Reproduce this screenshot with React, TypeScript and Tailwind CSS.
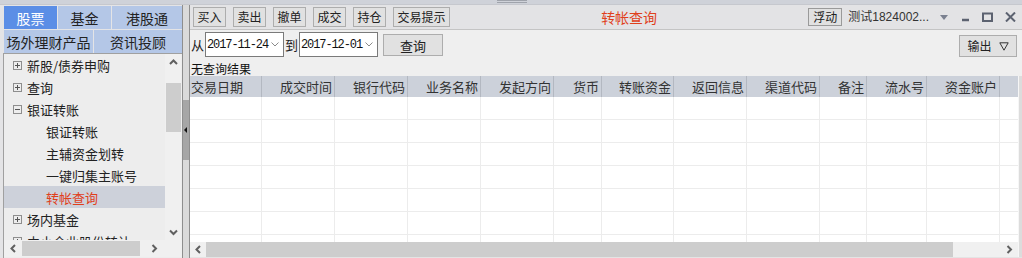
import React from "react";

type TreeRow = { label: string; box?: "plus" | "minus"; sub?: boolean; active?: boolean };

const tree: TreeRow[] = [
  { label: "新股/债券申购", box: "plus" },
  { label: "查询", box: "plus" },
  { label: "银证转账", box: "minus" },
  { label: "银证转账", sub: true },
  { label: "主辅资金划转", sub: true },
  { label: "一键归集主账号", sub: true },
  { label: "转帐查询", sub: true, active: true },
  { label: "场内基金", box: "plus" },
  { label: "中小企业股份转让", box: "plus" },
];

const columns = [
  { label: "交易日期", w: "w-[72px]", left: true },
  { label: "成交时间", w: "w-[73px]" },
  { label: "银行代码", w: "w-[73px]" },
  { label: "业务名称", w: "w-[73px]" },
  { label: "发起方向", w: "w-[73px]" },
  { label: "货币", w: "w-[48px]" },
  { label: "转账资金", w: "w-[72px]" },
  { label: "返回信息", w: "w-[73px]" },
  { label: "渠道代码", w: "w-[73px]" },
  { label: "备注", w: "w-[47px]" },
  { label: "流水号", w: "w-[60px]" },
  { label: "资金账户", w: "w-[73px]" },
];

const Box = ({ open }: { open?: boolean }) => (
  <svg width="9" height="9" viewBox="0 0 9 9" className="shrink-0">
    <rect x="0.5" y="0.5" width="8" height="8" fill="none" stroke="#8e8e8e" />
    <path d="M2 4.5h5" stroke="#555" />
    {!open && <path d="M4.5 2v5" stroke="#555" />}
  </svg>
);

const Chevron = ({ dir }: { dir: "up" | "down" | "left" | "right" }) => {
  const d = {
    up: "M1 5l3.5-3.5L8 5",
    down: "M1 1.5L4.5 5 8 1.5",
    left: "M5 1L1.5 4.5 5 8",
    right: "M1.5 1L5 4.5 1.5 8",
  }[dir];
  const vertical = dir === "up" || dir === "down";
  return (
    <svg width={vertical ? 9 : 7} height={vertical ? 7 : 9} viewBox={vertical ? "0 0 9 7" : "0 0 7 9"}>
      <path d={d} fill="none" stroke="#606060" strokeWidth="2" />
    </svg>
  );
};

const ToolButton = ({ label, w }: { label: string; w: string }) => (
  <button className={`flex h-[20px] ${w} items-center justify-center border border-[#adadad] bg-[#e1e1e1] text-[12px] leading-none text-[#222]`}>
    {label}
  </button>
);

const DateBox = ({ value }: { value: string }) => (
  <div className="flex h-[25px] w-[79px] items-center border border-[#7a7a7a] bg-white pl-[1px] pr-[4px]">
    <span className="font-['Liberation_Mono',monospace] text-[12px] tracking-[-1.1px] text-[#111]">{value}</span>
    <span className="ml-auto">
      <svg width="8" height="5" viewBox="0 0 8 5">
        <path d="M0.5 0.5L4 4 7.5 0.5" fill="none" stroke="#8a8a8a" />
      </svg>
    </span>
  </div>
);

function Sidebar() {
  return (
    <div className="flex w-[182px] shrink-0 flex-col bg-[#e4e4e6] pl-[3px] pt-[1px]">
      <div className="ml-[1px] flex h-[23px] gap-px text-[14px] leading-none">
        <div className="flex w-[53px] items-center justify-center bg-[#5b8ee6] text-white">股票</div>
        <div className="flex w-[53px] items-center justify-center bg-[#b4c7e7]">基金</div>
        <div className="flex flex-1 items-center justify-center bg-[#b4c7e7]">港股通</div>
      </div>
      <div className="ml-[1px] mt-px flex h-[23px] gap-px text-[14px] leading-none">
        <div className="flex w-[89px] items-center justify-center bg-[#b4c7e7]">场外理财产品</div>
        <div className="flex flex-1 items-center justify-center bg-[#b4c7e7]">资讯投顾</div>
      </div>
      <div className="flex flex-1 flex-col border-l border-t border-[#a0a0a0] bg-[#ededed]">
        <div className="flex h-[186px]">
          <div className="w-[161px] overflow-hidden">
            {tree.map((r, i) => (
              <div
                key={i}
                className={`flex h-[22px] items-center text-[13px] leading-none ${r.sub ? "pl-[42px]" : "pl-[9px]"} ${r.active ? "bg-[#cdd1da] text-[#e0401c]" : "text-[#222]"}`}
              >
                {r.box && <Box open={r.box === "minus"} />}
                <span className={r.box ? "ml-[5px]" : ""}>{r.label}</span>
              </div>
            ))}
          </div>
          <div className="flex w-[16px] flex-col items-center bg-[#f0f0f0]">
            <div className="flex h-[14px] items-center pt-[2px]">
              <Chevron dir="up" />
            </div>
            <div className="mt-[15px] h-[49px] w-[15px] bg-[#cdcdcd]" />
            <div className="mt-auto flex h-[16px] items-center">
              <Chevron dir="down" />
            </div>
          </div>
        </div>
        <div className="flex h-[17px] items-center bg-[#f0f0f0]">
          <div className="flex w-[18px] justify-center">
            <Chevron dir="left" />
          </div>
          <div className="h-[15px] w-[118px] bg-[#cdcdcd]" />
          <div className="flex flex-1 justify-center pr-[14px]">
            <Chevron dir="right" />
          </div>
        </div>
      </div>
    </div>
  );
}

function Splitter() {
  return (
    <div className="flex w-[8px] shrink-0 flex-col border-x border-[#8e8e8e] bg-[#dadada]">
      <div className="mt-[95px] flex h-[60px] items-center bg-[#a6a6a6] pl-[1px]">
        <svg width="4" height="6" viewBox="0 0 4 6">
          <path d="M3 0L0 3l3 3z" fill="#111" />
        </svg>
      </div>
    </div>
  );
}

function Main() {
  return (
    <div className="flex min-w-0 flex-1 flex-col">
      <div className="flex h-[25px] shrink-0 items-center border-b border-[#c4c4c4] bg-[#e3e3e5] pl-[3px]">
        <div className="flex gap-[7px]">
          <ToolButton label="买入" w="w-[33px]" />
          <ToolButton label="卖出" w="w-[33px]" />
          <ToolButton label="撤单" w="w-[33px]" />
          <ToolButton label="成交" w="w-[33px]" />
          <ToolButton label="持仓" w="w-[33px]" />
          <ToolButton label="交易提示" w="w-[57px]" />
        </div>
        <div className="flex flex-1 justify-center text-[14px] leading-none text-[#e0401c]">转帐查询</div>
        <div className="flex items-center pr-[6px]">
          <button className="flex h-[18px] w-[34px] items-center justify-center border border-[#9a9a9a] bg-[#e1e1e1] text-[12px] leading-none">
            浮动
          </button>
          <span className="ml-[6px] font-['Liberation_Sans','Noto_Sans_CJK_SC',sans-serif] text-[12px] leading-none text-[#333]">
            测试1824002...
          </span>
          <svg width="8" height="5" viewBox="0 0 8 5" className="ml-[11px]">
            <path d="M0 0h8L4 5z" fill="#7b8190" />
          </svg>
          <svg width="10" height="10" viewBox="0 0 10 10" className="ml-[13px]">
            <path d="M1 8h7" stroke="#5c6270" strokeWidth="2.5" />
          </svg>
          <svg width="11" height="10" viewBox="0 0 11 10" className="ml-[11px]">
            <rect x="1" y="1.5" width="9" height="7.5" fill="none" stroke="#5c6270" strokeWidth="2" />
          </svg>
          <svg width="11" height="10" viewBox="0 0 11 10" className="ml-[12px]">
            <path d="M1 0.5l9 9M10 0.5l-9 9" stroke="#5c6270" strokeWidth="2" />
          </svg>
        </div>
      </div>

      <div className="flex h-[31px] shrink-0 items-start pl-[1px] pt-[2px] text-[13px] leading-none">
        <span className="mt-[6px] w-[14px]">从</span>
        <DateBox value="2017-11-24" />
        <span className="ml-[1px] mt-[6px] w-[14px]">到</span>
        <DateBox value="2017-12-01" />
        <button className="ml-[5px] mt-[2px] flex h-[22px] w-[60px] items-center justify-center border border-[#adadad] bg-[#e1e1e1] text-[13px] leading-none">
          查询
        </button>
        <button className="ml-auto mr-[5px] mt-[3px] flex h-[22px] w-[58px] items-center justify-center gap-[7px] border border-[#adadad] bg-[#e1e1e1] text-[12px] leading-none">
          输出
          <svg width="10" height="9" viewBox="0 0 10 9">
            <path d="M0.8 0.8h8.4L5 8.2z" fill="none" stroke="#333" />
          </svg>
        </button>
      </div>

      <div className="h-[15px] shrink-0 pl-[1px] text-[12px] leading-[15px] text-[#111]">无查询结果</div>

      <div className="flex min-h-0 flex-1">
        <div className="flex w-[828px] flex-col">
          <div className="flex h-[21px] shrink-0 bg-[#ccd1da] text-[13px] leading-none text-[#333]">
            {columns.map((c) => (
              <div
                key={c.label}
                className={`flex ${c.w} shrink-0 items-center border-r border-[#b3b8c1] ${c.left ? "justify-start pl-[1px]" : "justify-end pr-[2px]"}`}
              >
                {c.label}
              </div>
            ))}
            <div className="flex-1" />
          </div>
          <div className="flex-1 overflow-hidden bg-white">
            {Array.from({ length: 7 }).map((_, i) => (
              <div key={i} className="flex h-[23px] border-b border-[#ececec]">
                {columns.map((c) => (
                  <div key={c.label} className={`${c.w} shrink-0 border-r border-[#ececec]`} />
                ))}
              </div>
            ))}
          </div>
          <div className="flex h-[15px] shrink-0 items-center bg-[#f0f0f0]">
            <div className="flex w-[16px] justify-center">
              <Chevron dir="left" />
            </div>
            <div className="h-[15px] w-[747px] bg-[#cdcdcd]" />
            <div className="flex flex-1 justify-end pr-[5px]">
              <Chevron dir="right" />
            </div>
          </div>
        </div>
        <div className="flex-1 border-l border-[#f6f6f6] bg-[#dcdcdc]" />
      </div>
      <div className="h-px shrink-0 bg-[#e4e4e4]" />
    </div>
  );
}

export default function App() {
  return (
    <div className="flex h-[258px] w-[1022px] flex-col overflow-hidden bg-[#efefef] font-['Noto_Sans_CJK_SC',sans-serif] text-[#222]">
      <div className="flex h-[5px] shrink-0 border-b border-[#c6c8ce] bg-[#cfd2d9] pl-[497px]">
        <div className="h-[3px] w-[30px] border-y border-[#9fa3ab]" />
      </div>
      <div className="flex min-h-0 flex-1">
        <Sidebar />
        <Splitter />
        <Main />
      </div>
    </div>
  );
}
